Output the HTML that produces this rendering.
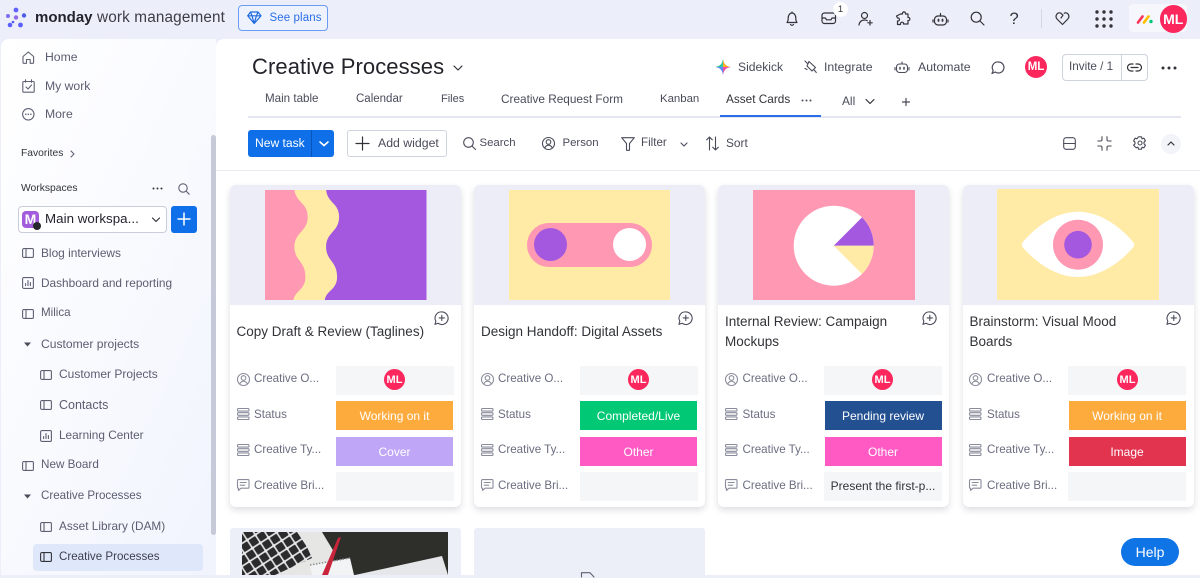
<!DOCTYPE html>
<html><head><meta charset="utf-8"><title>Creative Processes</title>
<style>
*{box-sizing:border-box;margin:0;padding:0}
html,body{width:1200px;height:575px;overflow:hidden;background:#eceff9;font-family:"Liberation Sans",sans-serif;color:#323338}
.t{position:absolute;white-space:nowrap;line-height:20px;height:20px}
.a{position:absolute}
.s{font-size:11.9px;color:#5b5d70}
.m{font-size:11.9px;color:#4a4b5a}
.l{font-size:11.6px;color:#6b6d80}
.ct{font-size:13.5px;color:#323338}
.cell{position:absolute;width:118px;height:29px;color:#fff;font-size:12px;text-align:center;line-height:31px}
.card{position:absolute;width:231px;height:322px;top:185px;background:#fff;border-radius:6px;box-shadow:0 3px 7px rgba(40,45,70,.16);overflow:hidden}
.img{position:absolute;left:0;top:0;width:231px;height:120px;background:#ecedf6}
.av{position:absolute;border-radius:50%;background:#fb275d;color:#fff;font-weight:bold;text-align:center}
svg{position:absolute;overflow:visible}
.i{fill:none;stroke:#5f6072;stroke-width:1.1;stroke-linecap:round;stroke-linejoin:round}
.d{fill:none;stroke:#323338;stroke-width:1.2;stroke-linecap:round;stroke-linejoin:round}
</style></head><body>
<svg width="0" height="0" style="position:absolute"><defs>
<g id="board"><rect x=".6" y="1.6" width="10.8" height="8.8" rx="1.2"/><path d="M4 1.6v8.8"/></g>
<g id="dash"><rect x=".6" y=".6" width="10.8" height="10.8" rx="1.2"/><path d="M3.6 8.6v-2M6 8.6v-5M8.4 8.6v-3"/></g>
<g id="user"><circle cx="6.500" cy="6.500" r="6"/><circle cx="6.500" cy="5" r="2.300"/><path d="M2.800 10.800c1-2 2.200-2.600 3.700-2.600s2.700.6 3.700 2.600"/></g>
<g id="rows"><rect x=".5" y=".5" width="11.500" height="2.600" rx="1"/><rect x=".5" y="4.700" width="11.500" height="2.600" rx="1"/><rect x=".5" y="8.900" width="11.500" height="2.600" rx="1"/></g>
<g id="chat"><path d="M1.500.6h9.500a1 1 0 0 1 1 1v6.600a1 1 0 0 1-1 1H4L1.500 11.400V9.200a1 1 0 0 1-1-1V1.600a1 1 0 0 1 1-1z"/><path d="M3.200 3.500h6M3.200 6.200h4.500"/></g>
<g id="add"><path d="M7.800.9a6.300 6.300 0 1 1-3.800 11.300L1 13.400l.8-3.200A6.300 6.300 0 0 1 7.800.9z"/><path d="M7.800 4.300v5.200M5.200 6.900h5.200"/></g>
<pattern id="keys" width="9.600" height="9.600" patternUnits="userSpaceOnUse" patternTransform="rotate(-33)"><rect width="9.600" height="9.600" fill="#e8e8e8"/><rect x=".8" y=".8" width="8" height="8" rx="1" fill="#2b2b2e"/></pattern>
</defs></svg>

<!-- TOP BAR -->
<svg style="left:5px;top:7px" width="22" height="22"><circle cx="11" cy="3" r="2.400" fill="#6161ff"/><circle cx="3" cy="9" r="2" fill="#7a6ff0"/><circle cx="11" cy="10.500" r="2.200" fill="#8f6be8"/><circle cx="19" cy="8.500" r="2.200" fill="#4f5be8"/><circle cx="5" cy="18" r="2.300" fill="#5b5fff"/><circle cx="15.500" cy="18" r="2.400" fill="#5b5fff"/><circle cx="8" cy="15" r="1.300" fill="#4f5be8"/></svg>
<div class="t" style="left:35px;top:8px;font-size:15px;font-weight:bold;color:#23232c">monday</div>
<div class="t" style="left:97px;top:8px;font-size:15.300px;color:#3c3c46;letter-spacing:.15px">work management</div>
<div class="a" style="left:238px;top:5px;width:90px;height:26px;border:1px solid #6c9bf2;border-radius:4px;background:#eef2fd"></div>
<svg style="left:247px;top:11px" width="15" height="14" fill="none" stroke="#1f6ae0" stroke-width="1.200" stroke-linejoin="round"><path d="M3.500 1h7.500l3 3.800-6.800 7.700L.7 4.800zM.7 4.800h13.300M5 4.800l2.200 7.700 2.200-7.700M3.500 1L5 4.800M11 1L9.400 4.800"/></svg>
<div class="t" style="left:269.500px;top:8px;font-size:11.500px;letter-spacing:.1px;color:#2a6ee8">See plans</div>

<svg class="d" style="left:785px;top:11px" width="14" height="16"><path d="M2 11.500c1-1 1.200-2 1.200-4.500C3.200 4 5 2 7 2s3.800 2 3.800 5c0 2.500.2 3.500 1.200 4.500zM5.500 13.500c.5 1 2.500 1 3 0M7 1v1"/></svg>
<svg class="d" style="left:821px;top:12px" width="16" height="13"><rect x="1" y="1" width="13.500" height="10.500" rx="2.500"/><path d="M1 6h3.500l1 1.800h4.500l1-1.800h3.500"/></svg>
<div class="a" style="left:833px;top:2px;width:15px;height:15px;border-radius:50%;background:#fff;font-size:9.500px;line-height:15px;text-align:center;color:#323338">1</div>
<svg class="d" style="left:858px;top:11px" width="16" height="16"><circle cx="6.500" cy="4.500" r="3"/><path d="M1 14c.3-3 2.500-5 5.500-5 1 0 2 .2 2.800.7M12 9.500v4.500M9.800 11.800h4.400"/></svg>
<svg class="d" style="left:895px;top:11px" width="16" height="16"><path d="M5.500 3h2c-.5-2.800 3.500-2.800 3 0H13v3.500c2.500-.5 2.500 3.500 0 3V13H8.500c.5-2.500-3.500-2.500-3 .5H2.500V10c2.600.5 2.600-3.600 0-3L1.500 5z"/></svg>
<svg class="d" style="left:933px;top:12px" width="15" height="15"><rect x="1.500" y="4" width="12" height="9" rx="3.500"/><path d="M7.500 4V1.500M0 8v2M15 8v2"/><path d="M5.500 7.500v1.500M9.500 7.500v1.500" stroke-width="1.800"/></svg>
<svg class="d" style="left:970px;top:11px" width="15" height="15"><circle cx="6.200" cy="6.200" r="5"/><path d="M10 10l4 4"/></svg>
<div class="t" style="left:1009.500px;top:9px;font-size:16.500px;color:#323338">?</div>
<div class="a" style="left:1041px;top:9px;width:1px;height:19px;background:#d3d6e3"></div>
<svg class="d" style="left:1055px;top:12px" width="15" height="13"><path d="M7.500 12.500L2 7C-.5 4 2.500-.5 5.800 1.200L8 3.200 6 6M7.500 12.500l5.300-5.500C15.500 4 12.500-.5 9.200 1.200"/></svg>
<svg style="left:1095px;top:10px" width="18" height="18" fill="#323338"><circle cx="2" cy="2" r="1.700"/><circle cx="9" cy="2" r="1.700"/><circle cx="16" cy="2" r="1.700"/><circle cx="2" cy="9" r="1.700"/><circle cx="9" cy="9" r="1.700"/><circle cx="16" cy="9" r="1.700"/><circle cx="2" cy="16" r="1.700"/><circle cx="9" cy="16" r="1.700"/><circle cx="16" cy="16" r="1.700"/></svg>
<div class="a" style="left:1129px;top:4px;width:58px;height:28px;border-radius:4px;background:#f6f7fc"></div>
<svg style="left:1136px;top:13px" width="22" height="12"><path d="M2 9.500L6.500 3.500" stroke="#f8375c" stroke-width="2.700" stroke-linecap="round"/><path d="M8 9.500l4.500-6" stroke="#ffc000" stroke-width="2.700" stroke-linecap="round"/><circle cx="15" cy="8.500" r="1.700" fill="#00c875"/></svg>
<div class="av" style="left:1159.500px;top:5px;width:27.500px;height:27.500px;line-height:28px;font-size:14px">ML</div>

<!-- SIDEBAR -->
<div class="a" style="left:1px;top:39px;width:215px;height:536px;border-radius:8px 0 0 0;background:linear-gradient(115deg,#fff 0%,#fbfcff 30%,#f1f4fd 100%)"></div>
<div class="a" style="left:211px;top:135px;width:5px;height:400px;border-radius:3px;background:#c6c9d8"></div>

<svg class="i" style="left:22px;top:51px" width="13" height="13"><path d="M1 5.500L6.300 1l5.300 4.500v6a.8.800 0 0 1-.8.800H8.200V8.500H4.500v3.800H1.800a.8.800 0 0 1-.8-.8z"/></svg>
<div class="t s" style="left:45px;top:47px;font-size:12.200px">Home</div>
<svg class="i" style="left:22px;top:79px" width="13" height="14"><rect x=".8" y="2.500" width="11.400" height="10.700" rx="1"/><path d="M3.500.8v2.500M9.500.8v2.500M4 8l2 2 3.500-4"/></svg>
<div class="t s" style="left:45px;top:76px;font-size:12.200px">My work</div>
<svg class="i" style="left:22px;top:108px" width="13" height="13"><circle cx="6.300" cy="6.300" r="5.700"/><path d="M3.800 6.300h.1M6.300 6.300h.1M8.800 6.300h.1" stroke-width="1.500"/></svg>
<div class="t s" style="left:45px;top:104px;font-size:12.200px">More</div>

<div class="t" style="left:21px;top:144px;font-size:10.300px;color:#323338">Favorites</div>
<svg class="i" style="left:70px;top:150px" width="5" height="8"><path d="M1 1l3 3-3 3"/></svg>
<div class="t" style="left:21px;top:179px;font-size:10.300px;color:#323338">Workspaces</div>
<svg style="left:152px;top:187px" width="12" height="3" fill="#323338"><circle cx="1.500" cy="1.500" r="1"/><circle cx="5.500" cy="1.500" r="1"/><circle cx="9.500" cy="1.500" r="1"/></svg>
<svg class="i" style="left:178px;top:183px" width="12" height="12"><circle cx="5" cy="5" r="4.200"/><path d="M8 8l3.200 3.200"/></svg>
<div class="a" style="left:18px;top:206px;width:149px;height:27px;border:1px solid #c9ccdb;border-radius:4px;background:#fff"></div>
<div class="a" style="left:22px;top:211px;width:17px;height:17px;border-radius:4px;background:#a25ddc;color:#fff;font-size:14px;font-weight:bold;line-height:17px;text-align:center">M</div>
<div class="a" style="left:33px;top:222px;width:8px;height:8px;border-radius:50%;background:#26262e"></div>
<div class="t" style="left:45px;top:209px;font-size:13.300px;letter-spacing:.05px;color:#23232c">Main workspa...</div>
<svg class="d" style="left:151px;top:217px" width="10" height="6"><path d="M1.500 1L5 4.500 8.500 1"/></svg>
<div class="a" style="left:171px;top:206px;width:26px;height:27px;border-radius:3px;background:#0f6fe8"></div>
<svg style="left:177px;top:212px" width="14" height="14" stroke="#fff" stroke-width="1.500"><path d="M7 .5v13M.5 7h13"/></svg>

<svg class="i" style="left:22px;top:247px" width="12" height="12"><use href="#board"/></svg>
<div class="t s" style="left:41px;top:243px">Blog interviews</div>
<svg class="i" style="left:22px;top:277px" width="12" height="12"><use href="#dash"/></svg>
<div class="t s" style="left:41px;top:273px;font-size:11.850px">Dashboard and reporting</div>
<svg class="i" style="left:22px;top:308px" width="12" height="12"><use href="#board"/></svg>
<div class="t s" style="left:41px;top:303px;font-size:11.600px">Milica</div>
<svg style="left:23px;top:342px" width="9" height="5"><path d="M1 .5h7L4.500 4.500z" fill="#4a4b5a"/></svg>
<div class="t s" style="left:41px;top:334px;font-size:12.100px">Customer projects</div>
<svg class="i" style="left:40px;top:369px" width="12" height="12"><use href="#board"/></svg>
<div class="t s" style="left:59px;top:364px;font-size:12px">Customer Projects</div>
<svg class="i" style="left:40px;top:399px" width="12" height="12"><use href="#board"/></svg>
<div class="t s" style="left:59px;top:395px;font-size:12.500px">Contacts</div>
<svg class="i" style="left:40px;top:430px" width="12" height="12"><use href="#dash"/></svg>
<div class="t s" style="left:59px;top:425px;font-size:11.800px">Learning Center</div>
<svg class="i" style="left:22px;top:460px" width="12" height="12"><use href="#board"/></svg>
<div class="t s" style="left:41px;top:455px;font-size:11.700px">New Board</div>
<svg style="left:23px;top:494px" width="9" height="5"><path d="M1 .5h7L4.500 4.500z" fill="#4a4b5a"/></svg>
<div class="t s" style="left:41px;top:486px;font-size:11.600px">Creative Processes</div>
<svg class="i" style="left:40px;top:521px" width="12" height="12"><use href="#board"/></svg>
<div class="t s" style="left:59px;top:516px;font-size:11.800px">Asset Library (DAM)</div>
<div class="a" style="left:33px;top:544px;width:170px;height:27px;border-radius:4px;background:#dfe8fb"></div>
<svg class="i" style="left:40px;top:551px;stroke:#323338" width="12" height="12"><use href="#board"/></svg>
<div class="t" style="left:59px;top:547px;font-size:11.600px;color:#3d3e4c">Creative Processes</div>

<!-- MAIN -->
<div class="a" style="left:216px;top:39px;width:984px;height:536px;background:#fff;border-radius:8px 0 0 0"></div>
<div class="t" style="left:252px;top:53px;height:28px;line-height:28px;font-size:22px;color:#23232c;letter-spacing:.08px">Creative Processes</div>
<svg class="d" style="left:453px;top:65px" width="10" height="6"><path d="M1 1l4 4 4-4"/></svg>

<svg style="left:715px;top:59px" width="16" height="16"><path d="M8 0c.6 4.500 2.500 7 7.500 8-5 1-6.900 3.500-7.500 8-.6-4.500-2.500-7-7.500-8C5.500 7 7.400 4.500 8 0z" fill="#5b8cff"/><path d="M8 0c.6 4.500 2.500 7 7.500 8H8z" fill="#ffb020"/><path d="M8 0v8H.5C5.500 7 7.400 4.500 8 0z" fill="#2fc8a0"/><path d="M8 16v-8h7.500c-5 1-6.900 3.500-7.500 8z" fill="#f04fa8"/></svg>
<div class="t m" style="left:738px;top:57px;font-size:12.100px">Sidekick</div>
<svg class="i" style="left:804px;top:60px;stroke:#4a4b5a" width="13" height="14"><path d="M1 1l2.500 2.500M5 1.500l6.500 6-3.500 3.500-5-5zM9.800 9.500l2.500 3M1 8.500l2 1"/></svg>
<div class="t m" style="left:824px;top:57px;font-size:12.300px">Integrate</div>
<svg class="i" style="left:895px;top:61px;stroke:#4a4b5a" width="14" height="13"><rect x="1.500" y="3" width="11" height="8.500" rx="3"/><path d="M7 3V1M0 6.500v2.500M14 6.500v2.500"/><path d="M5 6.500v1.500M9 6.500v1.500" stroke-width="1.600"/></svg>
<div class="t m" style="left:918px;top:57px;font-size:12.300px">Automate</div>
<svg class="d" style="left:991px;top:61px;stroke:#4a4b5a" width="14" height="14"><path d="M7.500 1a5.500 5.500 0 1 1-3.200 10L1 12.500l1.200-3A5.500 5.500 0 0 1 7.500 1z"/></svg>
<div class="av" style="left:1025px;top:56px;width:22px;height:22px;line-height:23px;font-size:11.500px">ML</div>
<div class="a" style="left:1062px;top:54px;width:86px;height:27px;border:1px solid #cfd2df;border-radius:4px"></div>
<div class="a" style="left:1121px;top:54px;width:1px;height:27px;background:#cfd2df"></div>
<div class="t m" style="left:1069px;top:57px;font-size:11.700px">Invite / 1</div>
<svg class="d" style="left:1127px;top:63px" width="15" height="9"><path d="M6 1H4a3.500 3.500 0 0 0 0 7h2M9 1h2a3.500 3.500 0 0 1 0 7H9M4 4.500h7"/></svg>
<svg style="left:1161px;top:66px" width="16" height="4" fill="#323338"><circle cx="2" cy="2" r="1.500"/><circle cx="8" cy="2" r="1.500"/><circle cx="14" cy="2" r="1.500"/></svg>

<!-- TABS -->
<div class="t m" style="left:265px;top:89px;font-size:11.600px">Main table</div>
<div class="t m" style="left:356px;top:89px;font-size:11.500px">Calendar</div>
<div class="t m" style="left:441px;top:89px;font-size:11px">Files</div>
<div class="t m" style="left:501px;top:89px;font-size:11.800px">Creative Request Form</div>
<div class="t m" style="left:660px;top:89px;font-size:11.400px">Kanban</div>
<div class="t m" style="left:726px;top:89px;font-size:11.800px;color:#323338">Asset Cards</div>
<svg style="left:801px;top:99px" width="11" height="3" fill="#4a4b5a"><circle cx="1.500" cy="1.500" r="1"/><circle cx="5.500" cy="1.500" r="1"/><circle cx="9.500" cy="1.500" r="1"/></svg>
<div class="t m" style="left:842px;top:91px">All</div>
<svg class="d" style="left:865px;top:98px" width="10" height="7"><path d="M1 1.500l4 4 4-4"/></svg>
<svg class="d" style="left:902px;top:98px;stroke:#4a4b5a" width="8" height="8"><path d="M4 .5v7M.5 4h7"/></svg>
<div class="a" style="left:248px;top:116px;width:933px;height:1.500px;background:#e4e6f1"></div>
<div class="a" style="left:720px;top:115px;width:101px;height:1.500px;background:#2a6ee8"></div>

<!-- TOOLBAR -->
<div class="a" style="left:248px;top:130px;width:86px;height:27px;border-radius:3px;background:#0f6fe8"></div>
<div class="a" style="left:311px;top:130px;width:1px;height:27px;background:#0a55b8"></div>
<div class="t" style="left:255px;top:133px;font-size:12.100px;color:#fff">New task</div>
<svg style="left:319px;top:141px" fill="none" stroke="#fff" stroke-width="1.600" stroke-linecap="round" width="10" height="6"><path d="M1 1l4 3.500L9 1"/></svg>
<div class="a" style="left:347px;top:130px;width:100px;height:27px;border:1px solid #cfd2df;border-radius:3px"></div>
<svg class="d" style="left:356px;top:137px" width="13" height="13"><path d="M6.500 0v13M0 6.500h13"/></svg>
<div class="t m" style="left:378px;top:133px;font-size:12.300px">Add widget</div>
<svg class="i" style="left:463px;top:137px;stroke:#4a4b5a" width="13" height="13"><circle cx="5.500" cy="5.500" r="4.800"/><path d="M9 9l3.500 3.500"/></svg>
<div class="t m" style="left:479.500px;top:133px;font-size:11.400px">Search</div>
<svg class="i" style="left:542px;top:137px;stroke:#4a4b5a" width="13" height="13"><use href="#user"/></svg>
<div class="t m" style="left:562.500px;top:133px;font-size:11.400px">Person</div>
<svg class="i" style="left:621px;top:137px;stroke:#4a4b5a" width="14" height="14"><path d="M.7.700h12.600L8.500 6.500v6.800H5.500V6.500z"/></svg>
<div class="t m" style="left:641px;top:133px;font-size:11.600px">Filter</div>
<svg class="i" style="left:680px;top:142px;stroke:#4a4b5a" width="8" height="5"><path d="M1 1l3 3 3-3"/></svg>
<svg class="i" style="left:706px;top:136px;stroke:#4a4b5a" width="13" height="15"><path d="M3.500 14V1M.7 3.800L3.500 1l2.800 2.800M9.500 1v13M6.700 11.200L9.500 14l2.800-2.800"/></svg>
<div class="t m" style="left:726px;top:133px">Sort</div>
<svg class="i" style="left:1063px;top:137px;stroke:#4a4b5a" width="13" height="13"><rect x=".7" y=".7" width="11.600" height="11.600" rx="2.500"/><path d="M.7 6.500h11.600"/></svg>
<svg class="i" style="left:1097px;top:136px;stroke:#4a4b5a" width="15" height="15"><path d="M5 .7V3.500a1.500 1.500 0 0 1-1.500 1.500H.8M10 .7v2.800a1.500 1.500 0 0 0 1.500 1.500h2.700M5 14.300v-2.800A1.500 1.500 0 0 0 3.500 10H.8M10 14.300v-2.800a1.500 1.500 0 0 1 1.500-1.500h2.700"/></svg>
<svg class="i" style="left:1133px;top:136px;stroke:#4a4b5a" width="14" height="15"><path d="M5.500.8h3l.5 2 1.900-.6 1.500 2.600-1.400 1.400v1.600l1.400 1.400-1.500 2.600-1.900-.6-.5 2h-3l-.5-2-1.900.6L.6 9.200 2 7.800V6.200L.6 4.800l1.500-2.600 1.900.6z"/><circle cx="7" cy="7" r="2"/></svg>
<div class="a" style="left:1161px;top:134px;width:20px;height:20px;border-radius:50%;background:#f3f4f9"></div>
<svg class="d" style="left:1167px;top:141px" width="8" height="5"><path d="M1 4l3-3 3 3"/></svg>
<div class="a" style="left:216px;top:170px;width:984px;height:1px;background:#e8e9f1"></div>

<!-- CARD 1 -->
<div class="card" style="left:230px"><div class="img"></div></div>
<svg style="left:264.600px;top:190px" width="162" height="110"><g transform="translate(-264.600,-190)"><rect x="264.600" y="190" width="161.500" height="110" fill="#a358df"/><path d="M264.600 190H325.700C327 203 338.700 203 338.700 216.700C338.700 232 325.700 232 325.700 246.700C325.700 261 336.700 261 336.700 276.700C336.700 290 326 290 324.300 300H264.600z" fill="#ffeba6"/><path d="M264.600 190H294C296 203 307.300 203 307.300 216.700C307.300 232 294 232 294 246.700C294 261 305 261 305 276.700C305 290 295 290 293 300H264.600z" fill="#ff98b3"/></g></svg>
<div class="t ct" style="left:236.500px;top:322px">Copy Draft &amp; Review (Taglines)</div>

<!-- CARD 2 -->
<div class="card" style="left:474px"><div class="img"></div></div>
<div class="a" style="left:508.600px;top:190px;width:161.500px;height:110px;background:#ffeba6"></div>
<div class="a" style="left:527.300px;top:222.700px;width:124.400px;height:44.600px;border-radius:23px;background:#ff98b3"></div>
<div class="a" style="left:533.500px;top:228.200px;width:33px;height:33px;border-radius:50%;background:#a358df"></div>
<div class="a" style="left:612.800px;top:228.200px;width:33px;height:33px;border-radius:50%;background:#fff"></div>
<div class="t ct" style="left:481px;top:322px">Design Handoff: Digital Assets</div>

<!-- CARD 3 -->
<div class="card" style="left:718px"><div class="img"></div></div>
<div class="a" style="left:753px;top:190px;width:161.500px;height:110px;background:#ff98b3"></div>
<svg style="left:0;top:0" width="1200" height="575"><circle cx="833.700" cy="245.700" r="40" fill="#fff"/><path d="M833.700 245.700L862 217.400A40 40 0 0 1 873.700 245.700z" fill="#a358df"/><path d="M833.700 245.700H873.700A40 40 0 0 1 862 274z" fill="#ffeba6"/></svg>
<div class="t ct" style="left:725px;top:312px">Internal Review: Campaign</div>
<div class="t ct" style="left:725px;top:332px">Mockups</div>

<!-- CARD 4 -->
<div class="card" style="left:963px"><div class="img"></div></div>
<div class="a" style="left:997px;top:189px;width:161.500px;height:111px;background:#ffeba6"></div>
<svg style="left:0;top:0" width="1200" height="575"><path d="M1022.500 242.500C1038 224 1058 211.700 1078 211.700S1118 224 1133.500 242.500Q1135 245 1133.500 247C1118 265 1098 277 1078 277S1038 265 1022.500 247Q1021 245 1022.500 242.500z" fill="#fff"/><circle cx="1078" cy="244.700" r="25" fill="#ff98b3"/><circle cx="1078" cy="244.700" r="13.800" fill="#a358df"/></svg>
<div class="t ct" style="left:969.500px;top:312px">Brainstorm: Visual Mood</div>
<div class="t ct" style="left:969.500px;top:332px">Boards</div>

<!-- add-update icons -->
<svg class="i" style="left:434px;top:311px;stroke:#4a4b5a" width="15" height="15"><use href="#add"/></svg>
<svg class="i" style="left:678px;top:311px;stroke:#4a4b5a" width="15" height="15"><use href="#add"/></svg>
<svg class="i" style="left:922px;top:311px;stroke:#4a4b5a" width="15" height="15"><use href="#add"/></svg>
<svg class="i" style="left:1166px;top:311px;stroke:#4a4b5a" width="15" height="15"><use href="#add"/></svg>

<!-- card rows: card 1 -->
<svg class="i" style="left:236.500px;top:372.500px;stroke:#8a8c9c" width="13" height="13"><use href="#user"/></svg>
<svg class="i" style="left:236.500px;top:408px;stroke:#8a8c9c" width="13" height="12"><use href="#rows"/></svg>
<svg class="i" style="left:236.500px;top:443.500px;stroke:#8a8c9c" width="13" height="12"><use href="#rows"/></svg>
<svg class="i" style="left:236.500px;top:479px;stroke:#8a8c9c" width="13" height="12"><use href="#chat"/></svg>
<div class="t l" style="left:254px;top:369px">Creative O...</div>
<div class="t l" style="left:254px;top:405px">Status</div>
<div class="t l" style="left:254px;top:440px">Creative Ty...</div>
<div class="t l" style="left:254px;top:476px">Creative Bri...</div>
<div class="cell" style="left:336px;top:366px;background:#f5f6f8"></div>
<div class="av" style="left:384px;top:369px;width:21px;height:21px;line-height:22px;font-size:11px">ML</div>
<div class="cell" style="left:336px;top:401px;background:#fdab3d;width:117px">Working on it</div>
<div class="cell" style="left:336px;top:436.500px;background:#c0a6f6;width:117px">Cover</div>
<div class="cell" style="left:336px;top:472px;background:#f5f6f8"></div>

<!-- card 2 -->
<svg class="i" style="left:480.500px;top:372.500px;stroke:#8a8c9c" width="13" height="13"><use href="#user"/></svg>
<svg class="i" style="left:480.500px;top:408px;stroke:#8a8c9c" width="13" height="12"><use href="#rows"/></svg>
<svg class="i" style="left:480.500px;top:443.500px;stroke:#8a8c9c" width="13" height="12"><use href="#rows"/></svg>
<svg class="i" style="left:480.500px;top:479px;stroke:#8a8c9c" width="13" height="12"><use href="#chat"/></svg>
<div class="t l" style="left:498px;top:369px">Creative O...</div>
<div class="t l" style="left:498px;top:405px">Status</div>
<div class="t l" style="left:498px;top:440px">Creative Ty...</div>
<div class="t l" style="left:498px;top:476px">Creative Bri...</div>
<div class="cell" style="left:580px;top:366px;background:#f5f6f8"></div>
<div class="av" style="left:628px;top:369px;width:21px;height:21px;line-height:22px;font-size:11px">ML</div>
<div class="cell" style="left:580px;top:401px;background:#00c875;width:117px">Completed/Live</div>
<div class="cell" style="left:580px;top:436.500px;background:#ff5ac4;width:117px">Other</div>
<div class="cell" style="left:580px;top:472px;background:#f5f6f8"></div>

<!-- card 3 -->
<svg class="i" style="left:724.500px;top:372.500px;stroke:#8a8c9c" width="13" height="13"><use href="#user"/></svg>
<svg class="i" style="left:724.500px;top:408px;stroke:#8a8c9c" width="13" height="12"><use href="#rows"/></svg>
<svg class="i" style="left:724.500px;top:443.500px;stroke:#8a8c9c" width="13" height="12"><use href="#rows"/></svg>
<svg class="i" style="left:724.500px;top:479px;stroke:#8a8c9c" width="13" height="12"><use href="#chat"/></svg>
<div class="t l" style="left:742.500px;top:369px">Creative O...</div>
<div class="t l" style="left:742.500px;top:405px">Status</div>
<div class="t l" style="left:742.500px;top:440px">Creative Ty...</div>
<div class="t l" style="left:742.500px;top:476px">Creative Bri...</div>
<div class="cell" style="left:824px;top:366px;background:#f5f6f8"></div>
<div class="av" style="left:872px;top:369px;width:21px;height:21px;line-height:22px;font-size:11px">ML</div>
<div class="cell" style="left:824.500px;top:401px;background:#225091;width:117px">Pending review</div>
<div class="cell" style="left:824.500px;top:436.500px;background:#ff5ac4;width:117px">Other</div>
<div class="cell" style="left:824px;top:472px;background:#f5f6f8;color:#323338;line-height:28px;font-size:12px">Present the first-p...</div>

<!-- card 4 -->
<svg class="i" style="left:969px;top:372.500px;stroke:#8a8c9c" width="13" height="13"><use href="#user"/></svg>
<svg class="i" style="left:969px;top:408px;stroke:#8a8c9c" width="13" height="12"><use href="#rows"/></svg>
<svg class="i" style="left:969px;top:443.500px;stroke:#8a8c9c" width="13" height="12"><use href="#rows"/></svg>
<svg class="i" style="left:969px;top:479px;stroke:#8a8c9c" width="13" height="12"><use href="#chat"/></svg>
<div class="t l" style="left:987px;top:369px">Creative O...</div>
<div class="t l" style="left:987px;top:405px">Status</div>
<div class="t l" style="left:987px;top:440px">Creative Ty...</div>
<div class="t l" style="left:987px;top:476px">Creative Bri...</div>
<div class="cell" style="left:1068px;top:366px;background:#f5f6f8"></div>
<div class="av" style="left:1117px;top:369px;width:21px;height:21px;line-height:22px;font-size:11px">ML</div>
<div class="cell" style="left:1068.500px;top:401px;background:#fdab3d;width:117px">Working on it</div>
<div class="cell" style="left:1068.500px;top:436.500px;background:#e2344f;width:117px">Image</div>
<div class="cell" style="left:1068px;top:472px;background:#f5f6f8"></div>

<!-- BOTTOM ROW -->
<div class="a" style="left:230px;top:528px;width:231px;height:47px;background:#eceef8;border-radius:3px 3px 0 0"></div>
<div class="a" style="left:474px;top:528px;width:231px;height:47px;background:#eceef8;border-radius:3px 3px 0 0"></div>
<svg style="left:242px;top:532px;overflow:hidden" width="206" height="43">
<rect width="206" height="43" fill="#2e2f2b"/>
<path d="M0 0H80L92 20 80 43H0z" fill="#e6e6e4"/>
<path d="M0 0H55L65 15 70 26 33 43H0z" fill="url(#keys)"/>
<path d="M68 33L108 26 112 43H70z" fill="#f2f3f4"/>
<path d="M68 33l40-7" stroke="#8a8c90" stroke-width="1.500" stroke-dasharray="1.500 1.500"/>
<path d="M96 6l3-1-13 38h-6z" fill="#c8253c"/>
<path d="M113 43L200 24 206 43z" fill="#e6e7ea"/>
</svg>
<svg class="i" style="left:581px;top:572px;stroke:#5f6072" width="14" height="6"><path d="M.5 5V.7H9L13 5"/></svg>

<!-- HELP -->
<div class="a" style="left:1121px;top:538px;width:58px;height:28px;border-radius:14px;background:#0f74e6;color:#fff;font-size:14px;text-align:center;line-height:28px">Help</div>
</body></html>
